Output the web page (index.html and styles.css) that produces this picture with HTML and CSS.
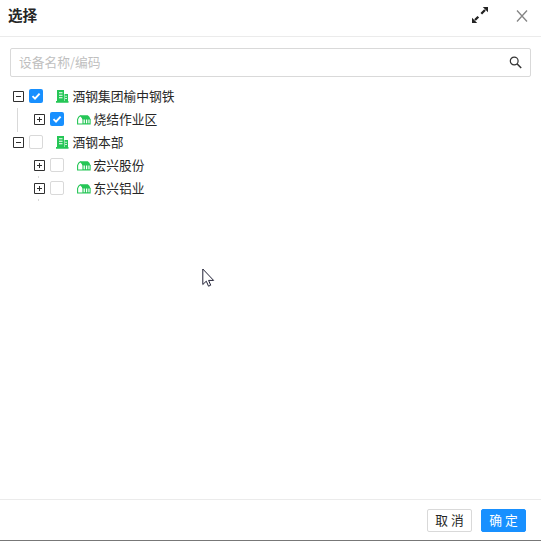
FILE: index.html
```html
<!DOCTYPE html>
<html lang="zh-CN">
<head>
<meta charset="utf-8">
<title>选择</title>
<link rel="stylesheet" href="styles.css">
</head>
<body>
<svg class="defs" width="0" height="0">
  <symbol id="minus" viewBox="0 0 12 12"><path d="M.5.5h10v10H.5zM3 5.5h5" fill="none" stroke="#303030"/></symbol>
  <symbol id="plus" viewBox="0 0 12 12"><path d="M.5.5h10v10H.5zM3 5.5h5M5.5 3v5" fill="none" stroke="#303030"/></symbol>
  <symbol id="building" viewBox="0 0 13 13"><path fill="#25c656" fill-rule="evenodd" d="M1 0h7v11H1zM3 2.2v1h3.5v-1zM3 4.7v1h3.5v-1zM3 7.2v1h3.5v-1zM8.5 4H12v7H8.5zM9.3 5.7v1h1.5v-1zM9.3 8v1h1.5V8zM0 11h12.5v1.7H0z"/></symbol>
  <symbol id="house" viewBox="0 0 14 10"><path fill="#25c656" d="M3 .2h7.8q1.8.8 2.8 4.3H6z"/><path d="M.6 9V4.4Q1.4 1.6 3.3.8 5.3 1.6 6 4.4V9zM6 8.9h7.1V4M8.4 4v5M10.8 4v5" fill="none" stroke="#25c656" stroke-width="1.1"/></symbol>
</svg>
<div class="modal">
  <header class="header">
    <h1 class="title">选择</h1>
    <svg class="expand" width="18" height="18" viewBox="0 0 18 18"><path d="M10.3 7.7 14 4M7.3 10.7 4 14" stroke="#222" stroke-width="2.3"/><path fill="#222" d="M11.8 1H17v5.2zM1 11.8V17h5.2z"/></svg>
    <svg class="close" width="12" height="12" viewBox="0 0 12 12"><path d="M1 .5l10 11M11 .5l-10 11" stroke="#858585" stroke-width="1.3"/></svg>
  </header>
  <main class="content">
    <div class="search">
      <span class="placeholder">设备名称/编码</span>
      <svg width="13" height="13" viewBox="0 0 13 13"><circle cx="5.2" cy="5" r="3.9" fill="none" stroke="#333" stroke-width="1.2"/><path d="M8 7.8 12.2 12" stroke="#333" stroke-width="1.5"/></svg>
    </div>
    <div class="tree">
      <div class="row"><svg class="switch"><use href="#minus"/></svg><span class="check checked"><svg width="14" height="14"><path d="M3.5 7.2 6 9.7 10.6 4.6"/></svg></span><svg class="building"><use href="#building"/></svg><span class="label">酒钢集团榆中钢铁</span></div>
      <div class="row child guided"><svg class="switch"><use href="#plus"/></svg><span class="check checked"><svg width="14" height="14"><path d="M3.5 7.2 6 9.7 10.6 4.6"/></svg></span><svg class="house"><use href="#house"/></svg><span class="label">烧结作业区</span></div>
      <div class="row"><svg class="switch"><use href="#minus"/></svg><span class="check"></span><svg class="building"><use href="#building"/></svg><span class="label">酒钢本部</span></div>
      <div class="row child tail"><svg class="switch"><use href="#plus"/></svg><span class="check"></span><svg class="house"><use href="#house"/></svg><span class="label">宏兴股份</span></div>
      <div class="row child tail"><svg class="switch"><use href="#plus"/></svg><span class="check"></span><svg class="house"><use href="#house"/></svg><span class="label">东兴铝业</span></div>
    </div>
  </main>
  <footer class="footer">
    <button class="btn">取 消</button>
    <button class="btn primary">确 定</button>
  </footer>
  <svg class="cursor" width="13" height="20" viewBox="0 0 13 20"><path d="M.8 1v15.5l3.5-3.3 2.2 5 2.2-1-2.1-4.8h5z" fill="#fff" stroke="#202035"/></svg>
</div>
</body>
</html>
```

FILE: styles.css
```css
* { box-sizing: border-box; }
body {
  margin: 0;
  background: #fff;
  color: #262626;
  font: 12.75px/20px "Noto Sans CJK SC", sans-serif;
}
svg { display: block; flex: none; }
.defs { position: absolute; }
.modal {
  position: relative;
  display: flex;
  flex-direction: column;
  height: 541px;
  border-bottom: 1px solid #777;
}
.header {
  display: flex;
  align-items: center;
  height: 37px;
  padding: 0 13px 5px 8px;
  border-bottom: 1px solid #ebebeb;
}
.title {
  flex: 1;
  margin: 0;
  padding-bottom: 1px;
  font-size: 14.6px;
  line-height: 22px;
  font-weight: 600;
}
.expand { margin: 0 27px 1px 0; }
.content { flex: 1; padding: 11px 10px 0; }
.search {
  display: flex;
  align-items: center;
  justify-content: space-between;
  height: 29px;
  padding: 0 8px;
  border: 1px solid #d9d9d9;
  border-radius: 2px;
}
.placeholder { padding-bottom: 2px; color: #bfbfbf; }
.tree { padding: 8px 0 0 2px; }
.row {
  position: relative;
  display: flex;
  align-items: center;
  height: 23px;
  white-space: nowrap;
}
.child { padding-left: 21px; }
.switch { width: 12px; height: 12px; margin: 0 4px 0 1px; }
.check {
  flex: none;
  width: 14px;
  height: 14px;
  margin-bottom: 1px;
  border: 1px solid #d9d9d9;
  border-radius: 2px;
}
.checked { border: 0; background: #1890ff; }
.checked path { fill: none; stroke: #fff; stroke-width: 1.9; }
.building { width: 13px; height: 13px; margin: 0 3.5px 0 13px; }
.house { width: 14px; height: 10px; margin: 0 3px 0 12.5px; }
.label { padding-bottom: 2px; }
.guided::before {
  content: "";
  position: absolute;
  left: 5px;
  top: 0;
  width: 1px;
  height: 24px;
  background: #d9d9d9;
}
.tail::after {
  content: "";
  position: absolute;
  left: 26px;
  bottom: -1px;
  width: 1px;
  height: 2px;
  background: #d9d9d9;
}
.footer {
  display: flex;
  justify-content: flex-end;
  gap: 9px;
  height: 41px;
  padding: 9px 15px 0 0;
  border-top: 1px solid #ebebeb;
}
.btn {
  width: 45px;
  height: 23px;
  padding: 0 0 2px;
  border: 1px solid #d9d9d9;
  border-radius: 2px;
  background: #fff;
  color: #262626;
  font: inherit;
  line-height: 19px;
  white-space: nowrap;
}
.primary { border-color: #1890ff; background: #1890ff; color: #fff; }
.cursor { position: absolute; left: 202px; top: 268px; }
```
